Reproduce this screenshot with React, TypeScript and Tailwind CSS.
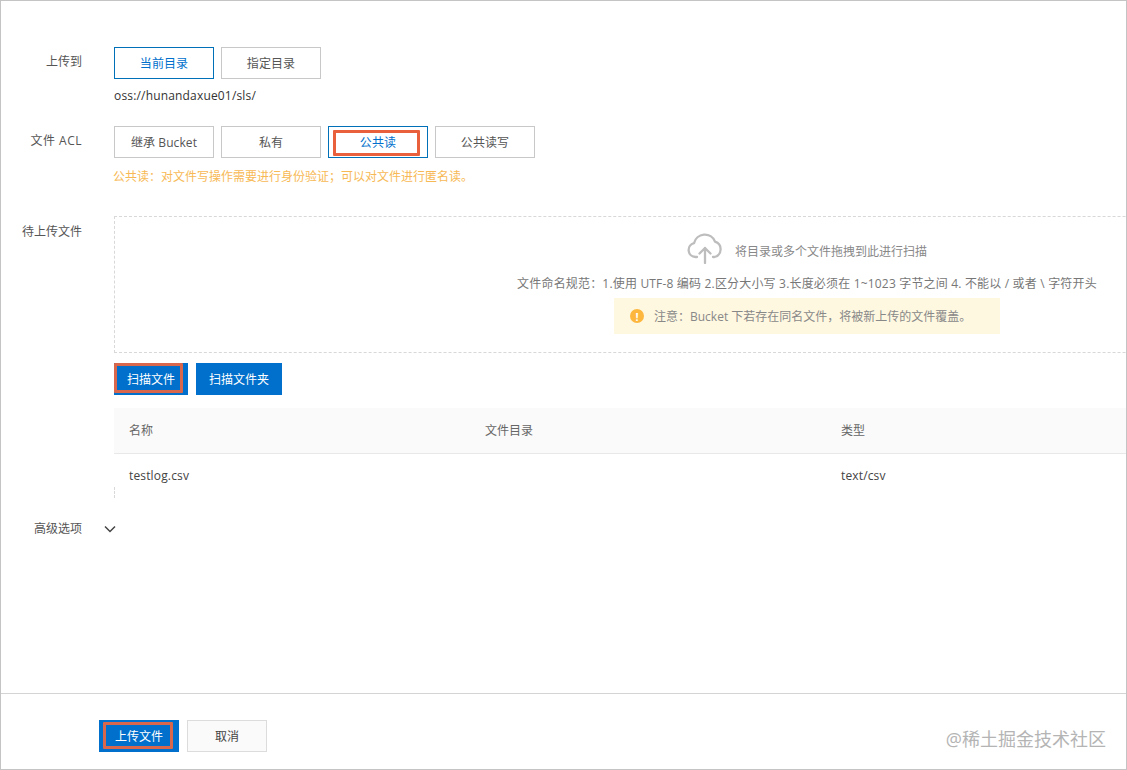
import React from "react";

const FONT = "font-['Open_Sans','Noto_Sans_CJK_SC',sans-serif]";

function Opt({ label, active, mark }: { label: string; active?: boolean; mark?: boolean }) {
  return (
    <button
      className={
        "relative h-8 w-[100px] border pt-[2px] text-xs tracking-[0.1px] " +
        (active ? "border-[#0070b8] text-[#0070cc]" : "border-[#c8c8c8] text-[#555]")
      }
    >
      {label}
      {mark && <span className="absolute left-[4px] top-[3px] h-[26px] w-[87px] border-[3px] border-[#e8603c] rounded-[1px]" />}
    </button>
  );
}

function Primary({ label, w, mark }: { label: string; w: string; mark?: string }) {
  return (
    <button className={"relative h-8 bg-[#0070cc] pt-[2px] text-xs text-white " + w}>
      {label}
      {mark && <span className={"absolute border-[3px] border-[#d9674c] rounded-[1px] " + mark} />}
    </button>
  );
}

function Row({ label, children, className, labelClass }: { label: React.ReactNode; children: React.ReactNode; className?: string; labelClass?: string }) {
  return (
    <div className={"flex " + (className ?? "")}>
      <div className={"w-[81px] shrink-0 text-right text-xs text-[#555] " + (labelClass ?? "leading-[30px]")}>{label}</div>
      <div className="ml-[32px] min-w-0 flex-1">{children}</div>
    </div>
  );
}

export default function App() {
  return (
    <div className={"flex h-[770px] w-[1127px] flex-col overflow-hidden border border-[#c4c4c4] bg-white " + FONT}>
      <div className="flex-1 pt-[46px]">
        <Row label="上传到">
          <div className="flex gap-[7px]">
            <Opt label="当前目录" active />
            <Opt label="指定目录" />
          </div>
          <div className="mt-[9px] text-xs leading-4 tracking-[0.17px] text-[#333]">oss://hunandaxue01/sls/</div>
        </Row>

        <Row label={<span className="tracking-[0.5px]">文件 ACL</span>} className="mt-[22px]">
          <div className="flex gap-[7px]">
            <Opt label="继承 Bucket" />
            <Opt label="私有" />
            <Opt label="公共读" active mark />
            <Opt label="公共读写" />
          </div>
          <div className="mt-[11px] -ml-px text-xs leading-4 text-[#f7b955]">公共读：对文件写操作需要进行身份验证；可以对文件进行匿名读。</div>
        </Row>

        <Row label="待上传文件" className="mt-[31px]" labelClass="leading-[32px]">
          <div className="flex h-[137px] w-[1386px] flex-col items-center border border-dashed border-[#d8d8d8] pt-[16px]">
            <div className="flex items-start gap-[12px]">
              <svg width="36" height="31" viewBox="0 0 36 31" fill="none" stroke="#bdbdbd" strokeWidth="2.3" strokeLinecap="round" strokeLinejoin="round">
                <path d="M10 24H8.5A7 7 0 0 1 7 10.2 11 11 0 0 1 28 8.6 8 8 0 0 1 27.500 24H26" />
                <path d="M18 30V15M12.500 20.500 18 15 23.500 20.500" />
              </svg>
              <span className="mt-[11px] text-xs leading-4 text-[#888]">将目录或多个文件拖拽到此进行扫描</span>
            </div>
            <div className="mt-[12px] whitespace-nowrap text-xs leading-4 tracking-[0.18px] text-[#777]">
              文件命名规范：1.使用 UTF-8 编码 2.区分大小写 3.长度必须在 1~1023 字节之间 4. 不能以 / 或者 \ 字符开头
            </div>
            <div className="mt-[6px] flex h-9 w-[386px] items-center bg-[#fff8e1] pl-[16px]">
              <span className="flex h-[14px] w-[14px] items-center justify-center rounded-full bg-[#fdb73e] text-[11px] font-bold leading-none text-white">!</span>
              <span className="ml-[10px] mt-[2px] text-xs text-[#888]">注意：Bucket 下若存在同名文件，将被新上传的文件覆盖。</span>
            </div>
          </div>
          <div className="mt-[10px] flex gap-[8px]">
            <Primary label="扫描文件" w="w-[74px]" mark="left-0 right-[5px] top-0 bottom-[2px]" />
            <Primary label="扫描文件夹" w="w-[86px]" />
          </div>
          <div className="mt-[13px] w-[1386px]">
            <div className="grid h-[46px] grid-cols-[356px_356px_1fr] items-center border-b border-[#e8e8e8] bg-[#fafafa] text-xs text-[#666]">
              <span className="pl-[15px]">名称</span>
              <span className="pl-[15px]">文件目录</span>
              <span className="pl-[15px]">类型</span>
            </div>
            <div className="relative grid h-[44px] grid-cols-[356px_356px_1fr] items-center text-xs tracking-[0.15px] text-[#444]">
              <span className="pl-[15px]">testlog.csv</span>
              <span />
              <span className="pl-[15px]">text/csv</span>
              <span className="absolute bottom-0 left-0 h-[11px] border-l border-dashed border-[#d8d8d8]" />
            </div>
          </div>
        </Row>

        <div className="mt-[23px] flex items-center">
          <div className="w-[81px] text-right text-xs leading-4 text-[#555]">高级选项</div>
          <svg className="ml-[21px]" width="14" height="14" viewBox="0 0 14 14" fill="none" stroke="#444" strokeWidth="1.5">
            <path d="M2 4.500 7 9.500 12 4.500" />
          </svg>
        </div>
      </div>

      <div className="relative flex h-[76px] shrink-0 items-start gap-[8px] border-t border-[#d4d4d4] pl-[98px] pt-[26px]">
        <Primary label="上传文件" w="w-[80px]" mark="left-[4px] right-[6px] top-[2px] bottom-[3px]" />
        <button className="h-8 w-[80px] border border-[#dcdcdc] bg-[#fafafa] pt-[2px] text-xs text-[#444]">取消</button>
        <span className="absolute right-[20px] top-[32px] text-[18px] leading-[26px] text-[#b4b4b4]">@稀土掘金技术社区</span>
      </div>
    </div>
  );
}
